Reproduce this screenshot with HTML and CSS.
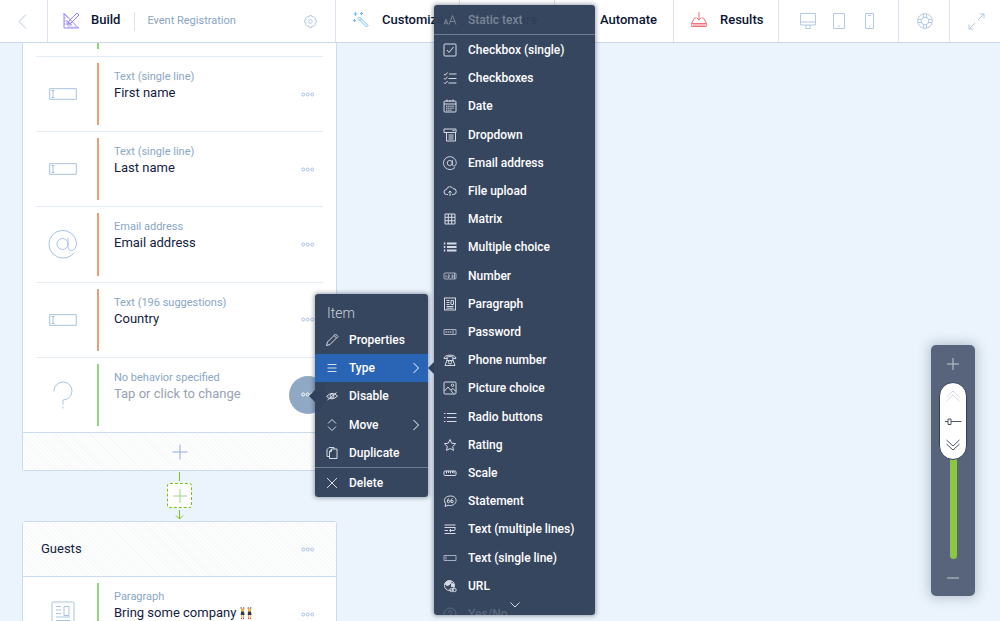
FILE: index.html
```html
<!DOCTYPE html>
<html lang="en">
<head>
<meta charset="utf-8">
<title>Event Registration</title>
<link rel="stylesheet" href="styles.css">
</head>
<body>
<svg class="sprite" aria-hidden="true">
  <symbol id="input" viewBox="0 0 28 12"><path d="M.7.7h26.6v10.6H.7zM2.5 2.5h3M2.5 9.500h3M4 2.500v7"/></symbol>
  <symbol id="dots" viewBox="0 0 14 5"><circle cx="2.200" cy="2.500" r="1.500"/><circle cx="6.700" cy="2.500" r="1.500"/><circle cx="11.200" cy="2.500" r="1.500"/></symbol>
  <symbol id="at" viewBox="0 0 30 30"><circle cx="14.500" cy="15" r="5.500"/><path d="M20 9v8.500c0 4 2.500 4 5 4 2.500-2 3.500-5 3.500-7.500A13.800 13.800 0 1 0 15 29c4 0 8-1.500 11-5"/></symbol>
  <symbol id="chev" viewBox="0 0 8 12"><path d="M1.500 1l5 5-5 5"/></symbol>
  <symbol id="plus" viewBox="0 0 16 16"><path d="M8 .5v15M.5 8h15"/></symbol>
</svg>

<header class="topbar">
  <button class="cell back" aria-label="Back"><svg class="ico" width="9" height="15" viewBox="0 0 9 15"><path d="M8 .5l-7 7 7 7"/></svg></button>
  <div class="cell build">
    <a href="#" class="tab"><svg class="ico violet" width="17" height="17" viewBox="0 0 17 17"><path d="M1 1.500v14.500h14.500zM4 8.500V13h4.500zM1 1.500l4.500 4.500M14 1l2 2-8 8-3 1 1-3zM1 6h1.500M1 9h1.500M1 12h1.500M6 16v-1.500M9 16v-1.500M12 16v-1.500"/></svg>Build</a>
    <span class="form-name">Event Registration</span>
    <button class="gear" aria-label="Settings"><svg class="ico" width="13" height="13" viewBox="0 0 13 13"><circle cx="6.500" cy="6.500" r="1.800"/><path d="M5.300.6h2.400l.5 1.500 1.500-.6 1.800 1.800-.6 1.500 1.500.5v2.400l-1.500.5.6 1.500-1.800 1.800-1.500-.6-.5 1.500H5.300l-.5-1.500-1.500.6-1.800-1.800.6-1.500L.6 7.700V5.300l1.500-.5-.6-1.500 1.800-1.800 1.500.6z"/></svg></button>
  </div>
  <a href="#" class="cell tab customize"><svg class="ico sky" width="16" height="16" viewBox="0 0 16 16"><path d="M5 6.500l1.500-1.500 8.500 8.500-1.500 1.500zM7 8.500L8.500 7M2.500 0v4M.5 2h4M8.500 0v3M7 1.500h3M1.500 7v3M0 8.500h3"/></svg>Customize</a>
  <a href="#" class="cell tab share"><svg class="ico green" width="14" height="14" viewBox="0 0 14 14"><circle cx="3" cy="7" r="2"/><circle cx="11" cy="3" r="2"/><circle cx="11" cy="11" r="2"/><path d="M5 6l4-2M5 8l4 2"/></svg>Share</a>
  <a href="#" class="cell tab automate">Automate</a>
  <a href="#" class="cell tab results"><svg class="ico red" width="16" height="16" viewBox="0 0 16 16"><path d="M5 6H3.500L.7 11v3.500h14.600V11l-2.800-5H11M.7 11.500h14.600M8 0v8M5.500 5.500L8 8l2.500-2.500M2 13h12"/></svg>Results</a>
  <div class="cell devices">
    <button aria-label="Desktop"><svg class="ico" width="16" height="16" viewBox="0 0 16 16"><path d="M.5.500h15v11.500H.5zM.5 9h15M6.500 12L5.500 15.500h5l-1-3.500"/></svg></button>
    <button aria-label="Tablet"><svg class="ico" width="12" height="16" viewBox="0 0 12 16"><path d="M.5.500h11v15H.5zM5 13h2"/></svg></button>
    <button aria-label="Phone"><svg class="ico" width="9" height="16" viewBox="0 0 9 16"><path d="M.5.500h8v15h-8zM3 2.500h3M4 13.500h1"/></svg></button>
  </div>
  <button class="cell help" aria-label="Help"><svg class="ico" width="16" height="16" viewBox="0 0 16 16"><circle cx="8" cy="8" r="7.400"/><circle cx="8" cy="8" r="3.800"/><path d="M6.500.8v3.700M9.500.8v3.700M6.500 11.500v3.700M9.500 11.500v3.700M.8 6.500h3.700M.8 9.500h3.700M11.500 6.500h3.700M11.500 9.500h3.700"/></svg></button>
  <button class="cell expand" aria-label="Full screen"><svg class="ico" width="17" height="17" viewBox="0 0 17 17"><path d="M10 7l6-6M11.500 1H16v4.500M7 10l-6 6M1 11.500V16h4.500"/></svg></button>
</header>

<main class="canvas">
  <section class="card first">
    <div class="stub"><i></i></div>
    <div class="rows">
      <article class="row"><svg class="ico" width="28" height="12"><use href="#input"/></svg><div class="text required"><small>Text (single line)</small><b>First name</b></div><button class="more" aria-label="More"><svg class="ico" width="14" height="5"><use href="#dots"/></svg></button></article>
      <article class="row"><svg class="ico" width="28" height="12"><use href="#input"/></svg><div class="text required"><small>Text (single line)</small><b>Last name</b></div><button class="more" aria-label="More"><svg class="ico" width="14" height="5"><use href="#dots"/></svg></button></article>
      <article class="row"><svg class="ico" width="30" height="30"><use href="#at"/></svg><div class="text required"><small>Email address</small><b>Email address</b></div><button class="more" aria-label="More"><svg class="ico" width="14" height="5"><use href="#dots"/></svg></button></article>
      <article class="row"><svg class="ico" width="28" height="12"><use href="#input"/></svg><div class="text required"><small>Text (196 suggestions)</small><b>Country</b></div><button class="more" aria-label="More"><svg class="ico" width="14" height="5"><use href="#dots"/></svg></button></article>
      <article class="row"><svg class="ico" width="20" height="28" viewBox="0 0 20 28"><path d="M1 10.500V9.500a9 9 0 1 1 9 9.500v4.500M10 25.500v2"/></svg><div class="text"><small>No behavior specified</small><b class="hint">Tap or click to change</b></div><button class="more active" aria-label="More"><svg class="ico" width="14" height="5"><use href="#dots"/></svg></button></article>
    </div>
    <button class="add" aria-label="Add item"><svg class="ico" width="16" height="16"><use href="#plus"/></svg></button>
  </section>
  <div class="connector">
    <span class="stem"></span>
    <button class="insert" aria-label="Add section"><svg class="ico" width="14" height="14" viewBox="0 0 14 14"><path d="M7 0v14M0 7h14"/></svg></button>
    <svg class="ico arrow" width="9" height="10" viewBox="0 0 9 10"><path d="M4.500 0v9M1 5.500L4.500 9 8 5.500"/></svg>
  </div>
  <section class="card guests">
    <header class="card-head"><h2>Guests</h2><button class="more" aria-label="More"><svg class="ico" width="14" height="5"><use href="#dots"/></svg></button></header>
    <article class="row"><svg class="ico" width="24" height="28" viewBox="0 0 24 28"><rect x="1" y="1" width="22" height="26" rx="1"/><path d="M5 5.500h5M5 9h5M5 12.500h5M5 16h14M5 19.500h14M13 5.500h5v9h-5z"/></svg><div class="text"><small>Paragraph</small><b>Bring some company <svg class="dancers" width="12" height="12" viewBox="0 0 12 12" role="img" aria-label="Dancers"><path d="M1.200 0v2M3.800 0v2M8.200 0v2M10.800 0v2" stroke="#444" stroke-width=".8"/><circle cx="2.500" cy="3" r="1.700" fill="#f0b43c"/><circle cx="9.500" cy="3" r="1.700" fill="#f0b43c"/><path d="M1 4.500h3l.6 3.500H.7zM8 4.500h3l.6 3.500H7.700z" fill="#353942"/><path d="M1.700 8v3.500M3.500 8v3.500M8.500 8v3.500M10.300 8v3.500" stroke="#e5a75c"/><path d="M1 11.500h1.200M3 11.500h1.200M8 11.500h1.200M10 11.500h1.200" stroke="#d44"/></svg></b></div><button class="more" aria-label="More"><svg class="ico" width="14" height="5"><use href="#dots"/></svg></button></article>
  </section>
</main>

<nav class="menu item-menu" aria-label="Item">
  <h3>Item</h3>
  <div class="entries">
    <button><svg class="ico" width="14" height="14" viewBox="0 0 14 14"><path d="M1.500 12.500l1-3.500 8-8 2.500 2.500-8 8zM9 2.500L11.500 5"/></svg>Properties</button>
    <button class="current"><svg class="ico" width="14" height="14" viewBox="0 0 14 14"><path d="M2.500 3.500h9M2.500 7h9M2.500 10.500h9"/></svg>Type<svg class="ico go" width="8" height="12"><use href="#chev"/></svg></button>
    <button><svg class="ico" width="14" height="14" viewBox="0 0 14 14"><path d="M1.500 7.500Q7 1.500 12.500 7 7 12.500 1.500 7.500zM2.500 11l9-7.500"/><circle cx="7" cy="7" r="2"/></svg>Disable</button>
    <button><svg class="ico" width="14" height="14" viewBox="0 0 14 14"><path d="M3 5.500L7 1.500l4 4M3 8.500l4 4 4-4"/></svg>Move<svg class="ico go" width="8" height="12"><use href="#chev"/></svg></button>
    <button><svg class="ico" width="14" height="14" viewBox="0 0 14 14"><path d="M4.500 5.500l2-2.500H12v9.500H4.500zM4.500 5.500h2V3M4.500 10.500H2v-7L4 1.500h5V3"/></svg>Duplicate</button>
  </div>
  <hr>
  <button><svg class="ico" width="14" height="14" viewBox="0 0 14 14"><path d="M2 2l10 10M12 2L2 12"/></svg>Delete</button>
</nav>

<nav class="menu type-menu" aria-label="Type">
  <button class="static"><svg class="ico" width="14" height="14" viewBox="0 0 14 14"><path d="M1 11.500L3 6.500l2 5M1.700 10h2.600M6 11.500l3.500-9 3.500 9M7.200 8.500h4.600"/></svg>Static text</button>
  <div class="scroll">
  <div class="entries">
    <button><svg class="ico" width="14" height="14" viewBox="0 0 14 14"><rect x="1" y="1" width="12" height="12" rx="1"/><path d="M4 7l2 2.500L10.500 4"/></svg>Checkbox (single)</button>
    <button><svg class="ico" width="14" height="14" viewBox="0 0 14 14"><path d="M1 3l1.200 1.200L4.500 1.500M1 7.200l1.200 1.200 2.300-2.700M1 11.500l1.200 1.200L4.500 10M6 3h7.500M5.500 7.500h8M5.500 12h8"/></svg>Checkboxes</button>
    <button><svg class="ico" width="14" height="14" viewBox="0 0 14 14"><rect x="1" y="2" width="12" height="11" rx="1"/><path d="M1 5h12M4 .5v2.500M10 .5v2.500M7 1v2"/><path d="M3 7.200h8.500M3 9.200h8.500M3 11.200h6" stroke-dasharray="1.500 .6"/></svg>Date</button>
    <button><svg class="ico" width="14" height="14" viewBox="0 0 14 14"><path d="M1 1h12v3.500H1zM3.500 4.500v8.500h9V4.500M5.500 7h5M5.500 9h5M5.500 11h5M9.500 2.500h2"/></svg>Dropdown</button>
    <button><svg class="ico at" width="14" height="14"><use href="#at"/></svg>Email address</button>
    <button><svg class="ico" width="14" height="14" viewBox="0 0 14 14"><path d="M5 10.500H3.500a2.500 2.500 0 0 1 0-5 3.500 3.500 0 0 1 6.500-1 3 3 0 0 1 .5 6H9M7 12V7M5.500 8.500L7 7l1.500 1.500"/></svg>File upload</button>
    <button><svg class="ico" width="14" height="14" viewBox="0 0 14 14"><path d="M2 2h10v10H2zM2 5.300h10M2 8.700h10M5.300 2v10M8.700 2v10"/></svg>Matrix</button>
    <button><svg class="ico bold" width="14" height="14" viewBox="0 0 14 14"><path d="M.8 3.500h1.500M.8 7h1.500M.8 10.500h1.500M4 3.500h9.500M4 7h9.500M4 10.500h9.500"/></svg>Multiple choice</button>
    <button><svg class="ico dim" width="14" height="14" viewBox="0 0 14 14"><rect x="1" y="4" width="12" height="6" rx="1"/><path d="M3 6v2.500M5 6h1.500v1.200H5v1.300h1.500M8.500 6H10v2.500H8.500M8.500 7.200H10M11.500 4v6"/></svg>Number</button>
    <button><svg class="ico" width="14" height="14" viewBox="0 0 14 14"><rect x="1.500" y="1" width="11" height="12"/><path d="M3.500 3.500h3M3.500 5.500h3M3.500 7.500h3M3.500 9.500h7M3.500 11.200h7M8 3.500h2.500v4H8z"/></svg>Paragraph</button>
    <button><svg class="ico dim" width="14" height="14" viewBox="0 0 14 14"><path d="M1 4.500h12v5H1z"/><path d="M2.500 7h6" stroke-width="1.500" stroke-dasharray="1.500 .7"/><path d="M10 4.500v5"/></svg>Password</button>
    <button><svg class="ico" width="14" height="14" viewBox="0 0 14 14"><path d="M1 5.500C1 1 13 1 13 5.500H10V4Q7 3 4 4v1.500zM4.500 5.500L2 12.500h10L9.500 5.500M4 7.500h6"/><circle cx="7" cy="9.300" r="1.700"/></svg>Phone number</button>
    <button><svg class="ico" width="14" height="14" viewBox="0 0 14 14"><rect x="1" y="1" width="12" height="12" rx="1"/><path d="M1.500 10L5 6l5.500 6.500M8 9l2-1.500 3 3"/><circle cx="9.500" cy="4.300" r="1.200"/></svg>Picture choice</button>
    <button><svg class="ico" width="14" height="14" viewBox="0 0 14 14"><path d="M1 3.500h1.500M1 7.500h1.500M1 11.500h1.500M4 3.500h9.500M4 7.500h9.500M4 11.500h9.500"/></svg>Radio buttons</button>
    <button><svg class="ico" width="14" height="14" viewBox="0 0 14 14"><path d="M7 1.500l1.700 3.700 4 .5-3 2.700.8 4L7 10.500l-3.500 1.900.8-4-3-2.700 4-.5z"/></svg>Rating</button>
    <button><svg class="ico" width="14" height="14" viewBox="0 0 14 14"><rect x="1" y="5" width="12" height="4.500" rx="1"/><path d="M3.500 5v2.500M5.500 5v2M7.500 5v2.500M9.500 5v2M11 5v2.500"/></svg>Scale</button>
    <button><svg class="ico" width="14" height="14" viewBox="0 0 14 14"><path d="M2 12.500l.7-2.800C-.5 5 3 2 7.500 2S13.500 5 13 7.500s-4 5-8 3.700z"/><circle cx="5.500" cy="7.500" r="1.200"/><circle cx="9" cy="7.500" r="1.200"/><path d="M4.300 7.500Q4.300 5 6 4.500M7.800 7.500Q7.800 5 9.500 4.500"/></svg>Statement</button>
    <button><svg class="ico" width="14" height="14" viewBox="0 0 14 14"><path d="M1.500 3h11M1.500 5.500h11M1.500 8.500H5M6.500 8.500h5q1.500-1.500 0-3M8 7L6.500 8.500 8 10M1.500 11.500h11"/></svg>Text (multiple lines)</button>
    <button><svg class="ico dim" width="14" height="14" viewBox="0 0 14 14"><path d="M1 4.500h12v5H1zM3 5.500v3"/></svg>Text (single line)</button>
    <button><svg class="ico" width="14" height="14" viewBox="0 0 14 14"><circle cx="6.500" cy="6.500" r="5"/><path d="M2 4l3-2 3.500.5L7 5 5 6.500 3 6zM8.500 4.500L11 5v3L8.500 7.500z" fill="currentColor"/><circle cx="8.500" cy="11" r="1.700"/><circle cx="11.500" cy="11" r="1.700"/></svg>URL</button>
    <button class="static"><svg class="ico" width="14" height="14" viewBox="0 0 14 14"><circle cx="7" cy="7" r="6"/><path d="M5.500 6q0-2 1.500-2t1.500 1.500T7 8v1"/></svg>Yes/No</button>
  </div>
  </div>
  <svg class="ico more-below" width="12" height="8" viewBox="0 0 12 8"><path d="M1.500 1.500L6 6l4.500-4.500"/></svg>
</nav>

<aside class="zoom">
  <button aria-label="Zoom in"><svg class="ico" width="12" height="12" viewBox="0 0 12 12"><path d="M6 0v12M0 6h12"/></svg></button>
  <div class="slider">
    <input type="range" aria-label="Zoom" min="0" max="100" value="100">
    <svg class="grip" width="26" height="76" viewBox="0 0 26 76"><path class="faint" d="M6.500 14L13 8l6.500 6M6.500 18L13 12l6.500 6"/><path d="M5 38.500h3M11 38.500h10.500M8 36h3v5.500H8zM6.500 57L13 63l6.500-6M6.500 61L13 67l6.500-6"/></svg>
  </div>
  <button aria-label="Zoom out"><svg class="ico" width="12" height="12" viewBox="0 0 12 12"><path d="M0 6h12"/></svg></button>
</aside>
</body>
</html>
```
FILE: styles.css
```css
* { box-sizing: border-box; }

body {
  margin: 0;
  height: 100vh;
  overflow: hidden;
  display: flex;
  flex-direction: column;
  background: #ebf4fc;
  color: #14213f;
  font: 12px/16px Roboto, sans-serif;
}

button {
  margin: 0;
  padding: 0;
  border: 0;
  background: none;
  color: inherit;
  font: inherit;
  display: flex;
  align-items: center;
  justify-content: center;
}

a { color: inherit; text-decoration: none; }
.sprite { position: absolute; width: 0; height: 0; }
.ico { fill: none; stroke: currentColor; stroke-width: 1; flex: none; color: #a9c3e0; }
.violet { color: #9a85f0; }
.sky { color: #6dbdf0; }
.green { color: #7cc576; }
.red { color: #f0707c; }

/* Top bar */
.topbar {
  flex: none;
  display: flex;
  height: 43px;
  background: #fff;
  border-bottom: 1px solid #c9d9ea;
}
.topbar .ico:not([class*=" "]) { color: #b4cae3; }
.cell {
  display: flex;
  align-items: center;
  border-right: 1px solid #d9e4f0;
}
.tab { font-size: 13px; font-weight: 500; color: #0c1533; padding-bottom: 2px; }
.cell.tab { padding-left: 17px; gap: 13px; }
.back { width: 48px; padding-right: 3px; }
.build { width: 288px; padding: 0 18px 0 15px; }
.build .tab { display: flex; align-items: center; gap: 11px; padding-right: 14px; border-right: 1px solid #d9e4f0; }
.form-name { margin-left: 12px; font-size: 11px; color: #8aa4c2; }
.gear { margin-left: auto; }
.customize { width: 124px; }
.share { width: 95px; }
.cell.automate { width: 119px; justify-content: flex-end; padding-right: 16px; }
.results { width: 105px; }
.devices { width: 120px; justify-content: center; gap: 15px; }
.devices button { width: 16px; }
.help { width: 51px; padding-left: 2px; }
.expand { flex: 1; border-right: 0; padding-left: 2px; }

/* Form canvas */
.canvas {
  flex: 1;
  min-height: 0;
  width: 315px;
  margin-left: 22px;
}
.card {
  background: #fff;
  border: 1px solid #cbdcee;
  border-radius: 3px;
}
.first { border-top: 0; border-radius: 0 0 3px 3px; }
.stub { height: 13px; padding-left: 74px; }
.stub i { display: block; width: 2px; height: 6px; background: #8fd67c; }
.rows { display: grid; grid-auto-rows: 1fr; height: 376px; }
.row {
  display: grid;
  grid-template-columns: 54px 1fr 30px;
  margin: 0 13px;
  padding: 6px 0;
  border-top: 1px solid #e3ecf5;
}
.row > .ico { place-self: center; }
.text {
  margin-left: 7px;
  padding: 6px 0 0 15px;
  border-left: 2px solid #8fd67c;
  display: flex;
  flex-direction: column;
}
.text.required { border-color: #f29a74; }
.text small { font-size: 11px; color: #8ba6c6; }
.text b { font-size: 13px; font-weight: 400; }
.text .hint { color: #98a2b3; }
.dancers { fill: none; vertical-align: -2px; }
.more.active {
  width: 38px;
  height: 38px;
  margin-left: -4px;
  align-self: center;
  border-radius: 50%;
  background: #8fa9c5;
}
.more.active .ico { color: #fff; }
.add, .card-head {
  background: repeating-linear-gradient(45deg, #f6f9fa 0 1px, #fdfdfd 1px 3px);
}
.add { width: 100%; height: 38px; border-top: 1px solid #cbdcee; }
.add .ico { color: #8eabe4; }

.connector {
  height: 50px;
  display: flex;
  flex-direction: column;
  align-items: center;
  gap: 2px;
  padding-top: 1px;
}
.stem { width: 1px; height: 9px; background: #7ec019; }
.insert { width: 25px; height: 25px; background: #fff; border: 1px dashed #7ec019; border-radius: 3px; }
.insert .ico { color: #9ed08a; }
.connector .arrow { color: #7ec019; }

.card-head {
  display: flex;
  justify-content: space-between;
  align-items: center;
  height: 55px;
  padding: 0 21px 0 18px;
  border-bottom: 1px solid #cbdcee;
}
.card-head h2 { margin: 0; font-size: 13px; font-weight: 400; }
.guests .row { height: 75px; border-top: 0; }

/* Menus */
.menu {
  position: absolute;
  display: flex;
  flex-direction: column;
  background: rgba(49, 64, 90, .97);
  border-radius: 3px;
  box-shadow: 0 0 4px 1px rgba(20, 35, 60, .4);
  color: #fff;
}
.menu::before {
  content: "";
  position: absolute;
  right: 100%;
  border: 6px solid transparent;
  border-left: 0;
  border-right-color: #31405a;
}
.menu .ico { color: #d5dce6; }
.menu .bold { stroke-width: 2; }
.menu .at { stroke-width: 2; }
.menu .dim { color: #a5afbf; }
.menu button { gap: 10px; justify-content: flex-start; padding: 0 8px 0 10px; height: 100%; font-weight: 500; }
.entries { display: grid; grid-auto-rows: 1fr; }
.item-menu { left: 315px; top: 294px; width: 113px; padding-top: 11px; }
.item-menu::before { top: 96px; }
.item-menu h3 { margin: 0 0 5px 12px; font-size: 14px; font-weight: 300; color: #cbd3de; }
.item-menu .entries { height: 141px; }
.item-menu > button { height: 29px; }
.item-menu hr { width: 100%; margin: 0; border: 0; border-top: 1px solid #6f7b8e; }
.menu .go { margin-left: auto; color: #fff; }
.current { background: #2a64b5; }
.type-menu { left: 434px; top: 5px; bottom: 6px; width: 161px; }
.type-menu::before { top: 357px; }
.type-menu button { gap: 11px; padding-left: 9px; }
.type-menu .entries { height: 592px; margin-top: 1px; }
.type-menu button.static { color: #7b8697; }
.type-menu .static .ico { color: #7b8697; }
.type-menu > .static { flex: none; height: 30px; border-bottom: 1px solid #6f7b8e; }
.scroll { flex: 1; min-height: 0; overflow: hidden; }
.scroll .static { opacity: .5; }
.more-below { position: absolute; left: 75px; bottom: 6px; }

/* Zoom control */
.zoom {
  position: absolute;
  right: 25px;
  bottom: 25px;
  width: 44px;
  display: flex;
  flex-direction: column;
  align-items: center;
  background: #57647c;
  border-radius: 5px;
  box-shadow: 0 0 12px 2px rgba(60, 80, 110, .3);
}
.zoom button { width: 100%; height: 37px; }
.zoom .ico { color: #c3cad5; }
.slider { position: relative; width: 28px; height: 177px; }
.slider::before {
  content: "";
  position: absolute;
  inset: 40px 10px 0 11px;
  border-radius: 4px;
  background: #8dc63f;
}
.slider input {
  position: relative;
  display: block;
  appearance: none;
  writing-mode: vertical-lr;
  direction: rtl;
  margin: 0;
  width: 28px;
  height: 177px;
  background: none;
}
.slider input::-webkit-slider-thumb {
  appearance: none;
  width: 28px;
  height: 78px;
  border: 1px solid #31405a;
  border-radius: 14px;
  background: #fff;
}
.grip { position: absolute; left: 1px; top: 1px; pointer-events: none; fill: none; stroke: #4a566c; }
.faint { stroke: #d5d8de; }
```
